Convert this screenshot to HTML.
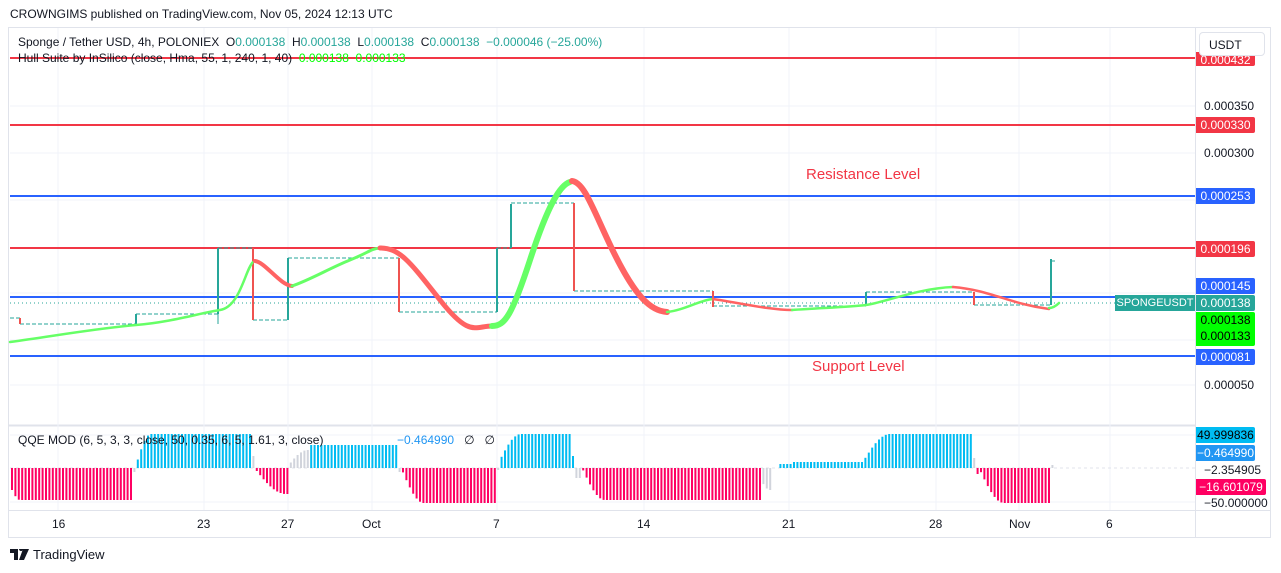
<!DOCTYPE html>
<html><head><meta charset="utf-8"><style>
body{margin:0;width:1281px;height:573px;background:#fff;font-family:"Liberation Sans",sans-serif;overflow:hidden;position:relative}
.t{position:absolute;white-space:nowrap;font-size:12px;color:#131722}
.lb{position:absolute;left:1196px;width:59px;height:16px;line-height:16px;font-size:12px;color:#fff;text-align:center;border-radius:0 2px 2px 0}
.ax{position:absolute;left:1204px;font-size:12px;color:#131722}
</style></head><body>
<div class="t" style="left:10px;top:7px">CROWNGIMS published on TradingView.com, Nov 05, 2024 12:13 UTC</div>
<svg width="1281" height="573" style="position:absolute;left:0;top:0" id="s">
<rect x="8.5" y="27.5" width="1262" height="510" fill="none" stroke="#e0e3eb"/>
<line x1="1195.5" y1="27" x2="1195.5" y2="537" stroke="#e0e3eb"/>
<line x1="8" y1="425.5" x2="1195" y2="425.5" stroke="#e0e3eb" stroke-width="2"/>
<line x1="8" y1="510.5" x2="1271" y2="510.5" stroke="#e0e3eb"/>
<g stroke="#f0f3fa">
<line x1="58" y1="28" x2="58" y2="510"/><line x1="204" y1="28" x2="204" y2="510"/><line x1="288" y1="28" x2="288" y2="510"/><line x1="372" y1="28" x2="372" y2="510"/><line x1="497" y1="28" x2="497" y2="510"/><line x1="644" y1="28" x2="644" y2="510"/><line x1="789" y1="28" x2="789" y2="510"/><line x1="936" y1="28" x2="936" y2="510"/><line x1="1019" y1="28" x2="1019" y2="510"/><line x1="1110" y1="28" x2="1110" y2="510"/>
<line x1="10" y1="106" x2="1195" y2="106"/><line x1="10" y1="153" x2="1195" y2="153"/><line x1="10" y1="200" x2="1195" y2="200"/><line x1="10" y1="293" x2="1195" y2="293"/><line x1="10" y1="340" x2="1195" y2="340"/><line x1="10" y1="385" x2="1195" y2="385"/>
<line x1="10" y1="435" x2="1195" y2="435"/><line x1="10" y1="502" x2="1195" y2="502"/>
</g>
<line x1="10" y1="468" x2="1195" y2="468" stroke="#e0e3eb" stroke-dasharray="3,3"/>
<g stroke-width="2">
<line x1="10" y1="58" x2="1195" y2="58" stroke="#f23645"/>
<line x1="10" y1="125" x2="1195" y2="125" stroke="#f23645"/>
<line x1="10" y1="196" x2="1195" y2="196" stroke="#2962ff"/>
<line x1="10" y1="248" x2="1195" y2="248" stroke="#f23645"/>
<line x1="10" y1="297" x2="1195" y2="297" stroke="#2962ff"/>
<line x1="10" y1="356" x2="1195" y2="356" stroke="#2962ff"/>
</g>
<line x1="10" y1="303" x2="1115" y2="303" stroke="#26a69a" stroke-dasharray="1,3"/>
<g id="cd"></g>
<g fill="none" stroke-linecap="round">
<path d="M10 342 C60 335,100 328,136 325 S200 313,220 310 S245 270,253 262" stroke="#66ff66" stroke-width="2.5"/>
<path d="M255 261 C265 262,280 285,292 286" stroke="#ff6363" stroke-width="4"/>
<path d="M292 286 C310 280,330 268,350 260 S370 249,380 248" stroke="#66ff66" stroke-width="3"/>
<path d="M380 248 C400 248,410 262,440 300 S475 326,492 326" stroke="#ff6363" stroke-width="5"/>
<path d="M492 326 C505 326,512 315,530 260 S560 185,570 182" stroke="#66ff66" stroke-width="6"/>
<path d="M572 181 C585 182,595 215,615 255 S650 311,667 312" stroke="#ff6363" stroke-width="6"/>
<path d="M667 312 C685 310,700 300,713 299" stroke="#66ff66" stroke-width="2.5"/>
<path d="M713 299 C740 303,770 310,792 310" stroke="#ff6363" stroke-width="2.5"/>
<path d="M792 310 C820 308,850 307,866 305 S920 288,953 287" stroke="#66ff66" stroke-width="2.5"/>
<path d="M953 287 C990 290,1010 304,1049 309" stroke="#ff6363" stroke-width="2.5"/>
<path d="M1049 308 C1053 308,1056 306,1059 303" stroke="#66ff66" stroke-width="2.5"/>
</g>
<g id="q"></g>
</svg>
<div class="t" style="left:18px;top:35px">Sponge / Tether USD, 4h, POLONIEX &nbsp;O<span style="color:#26a69a">0.000138</span> &nbsp;H<span style="color:#26a69a">0.000138</span> &nbsp;L<span style="color:#26a69a">0.000138</span> &nbsp;C<span style="color:#26a69a">0.000138 &nbsp;−0.000046 (−25.00%)</span></div>
<div class="t" style="left:18px;top:51px">Hull Suite by InSilico (close, Hma, 55, 1, 240, 1, 40) &nbsp;<span style="color:#00ff00">0.000138 &nbsp;0.000133</span></div>
<div class="t" style="left:806px;top:166px;font-size:15px;color:#f23645">Resistance Level</div>
<div class="t" style="left:812px;top:358px;font-size:15px;color:#f23645">Support Level</div>
<div class="t" style="left:18px;top:433px">QQE MOD (6, 5, 3, 3, close, 50, 0.35, 6, 5, 1.61, 3, close)</div>
<div class="t" style="left:397px;top:433px"><span style="color:#2196f3">−0.464990</span> &nbsp;&nbsp;∅ &nbsp;&nbsp;∅</div>
<div class="lb" style="top:52px;background:#f23645;height:14px">0.000432</div>
<div style="position:absolute;left:1199px;top:32px;width:66px;height:24px;border:1px solid #e0e3eb;border-radius:4px;background:#fff;font-size:12px;line-height:24px;padding-left:9px;box-sizing:border-box;color:#131722">USDT</div>
<div class="ax" style="top:99px">0.000350</div>
<div class="lb" style="top:117px;background:#f23645">0.000330</div>
<div class="ax" style="top:146px">0.000300</div>
<div class="lb" style="top:188px;background:#2962ff">0.000253</div>
<div class="lb" style="top:241px;background:#f23645">0.000196</div>
<div class="lb" style="top:278px;background:#2962ff">0.000145</div>
<div class="lb" style="top:295px;background:#26a69a">0.000138</div>
<div style="position:absolute;left:1115px;top:295px;width:80px;height:16px;line-height:16px;background:#26a69a;color:#fff;font-size:11px;text-align:center">SPONGEUSDT</div>
<div class="lb" style="top:312px;background:#00ff00;color:#000;height:34px;line-height:16px">0.000138<br>0.000133</div>
<div class="lb" style="top:349px;background:#2962ff">0.000081</div>
<div class="ax" style="top:378px">0.000050</div>
<div class="lb" style="top:427px;background:#00bcf2;color:#000">49.999836</div>
<div class="lb" style="top:445px;background:#2196f3">−0.464990</div>
<div class="ax" style="top:463px">−2.354905</div>
<div class="lb" style="top:479px;background:#ff0062;width:70px">−16.601079</div>
<div class="ax" style="top:496px">−50.000000</div>
<div class="t" style="left:52px;top:517px">16</div><div class="t" style="left:197px;top:517px">23</div><div class="t" style="left:281px;top:517px">27</div><div class="t" style="left:362px;top:517px">Oct</div><div class="t" style="left:493px;top:517px">7</div><div class="t" style="left:637px;top:517px">14</div><div class="t" style="left:782px;top:517px">21</div><div class="t" style="left:929px;top:517px">28</div><div class="t" style="left:1009px;top:517px">Nov</div><div class="t" style="left:1106px;top:517px">6</div>
<svg style="position:absolute;left:10px;top:549px" width="20" height="12"><path d="M0 0h8v11h-4v-7h-4z M9 0a2 2 0 1 1 0 .1z M13 0h6l-5 11h-5z" fill="#131722"/></svg>
<div class="t" style="left:33px;top:547px;font-size:13px">TradingView</div>
<script>
var ns="http://www.w3.org/2000/svg",cd=document.getElementById('cd'),q=document.getElementById('q');
function L(x1,y1,x2,y2,c,w,d){var l=document.createElementNS(ns,'line');l.setAttribute('x1',x1);l.setAttribute('y1',y1);l.setAttribute('x2',x2);l.setAttribute('y2',y2);l.setAttribute('stroke',c);l.setAttribute('stroke-width',w);if(d)l.setAttribute('stroke-dasharray',d);cd.appendChild(l);}
var G='#26a69a',R='#ef5350';
var cs=[[20,318,324,R],[136,314,324,G],[218,248,314,G],[253,248,320,R],[288,258,320,G],[399,258,312,R],[497,248,312,G],[511,204,248,G],[574,203,291,R],[713,291,307,R],[866,292,306,G],[974,292,305,R],[1051,259,305,G]];
var ds=[[10,20,318],[20,136,324],[136,218,314],[218,253,248],[253,288,320],[288,399,258],[399,497,312],[497,511,248],[511,574,203],[574,713,291],[713,866,306],[866,974,292],[974,1051,305]];
ds.forEach(function(d){L(d[0],d[2],d[1],d[2],G,1,'4,2');});
cs.forEach(function(c){L(c[0],c[1],c[0],c[2],c[3],2);});
L(218,314,218,324,G,1);L(1051,261,1055,261,G,1);
/* segments: x0,x1,color,startY,endY,rampLen */
var S=[[11,133,'r',490,500,8],[133,136,'g',472,472,1],[136,251,'b',462,434,14],[251,255,'g',456,456,1],[255,287,'r',470,494,30],[287,308,'g',466,450,20],[308,398,'b',445,445,1],[398,401,'g',472,472,1],[401,495,'r',470,503,22],[495,498,'g',470,470,1],[498,571,'b',462,434,22],[571,575,'b',456,456,1],[575,582,'g',478,478,1],[582,759,'r',470,500,22],[759,770,'g',478,490,10],[776,790,'b',464,464,1],[790,863,'b',462,462,1],[863,889,'b',460,434,26],[889,972,'b',434,434,1],[972,975,'g',458,458,1],[975,979,'r',474,474,1],[979,1050,'r',470,503,24],[1050,1054,'g',465,465,1]];
function val(x){for(var i=0;i<S.length;i++){var s=S[i];if(x>=s[0]&&x<s[1]){var t=Math.min(1,(x-s[0])/s[5]);return [s[2],s[3]+(s[4]-s[3])*Math.sin(t*1.5708)];}}return null;}
for(var x=11;x<1055;x+=3.4){var r=val(x);if(!r)continue;var c=r[0]=='r'?'#ff0062':r[0]=='b'?'#00bcf2':'#d1d4dc';var e=document.createElementNS(ns,'rect');var a=Math.min(468,r[1]),h=Math.abs(r[1]-468);e.setAttribute('x',x.toFixed(1));e.setAttribute('y',a.toFixed(1));e.setAttribute('width',2);e.setAttribute('height',Math.max(h,2).toFixed(1));e.setAttribute('fill',c);q.appendChild(e);}
</script>
</body></html>
